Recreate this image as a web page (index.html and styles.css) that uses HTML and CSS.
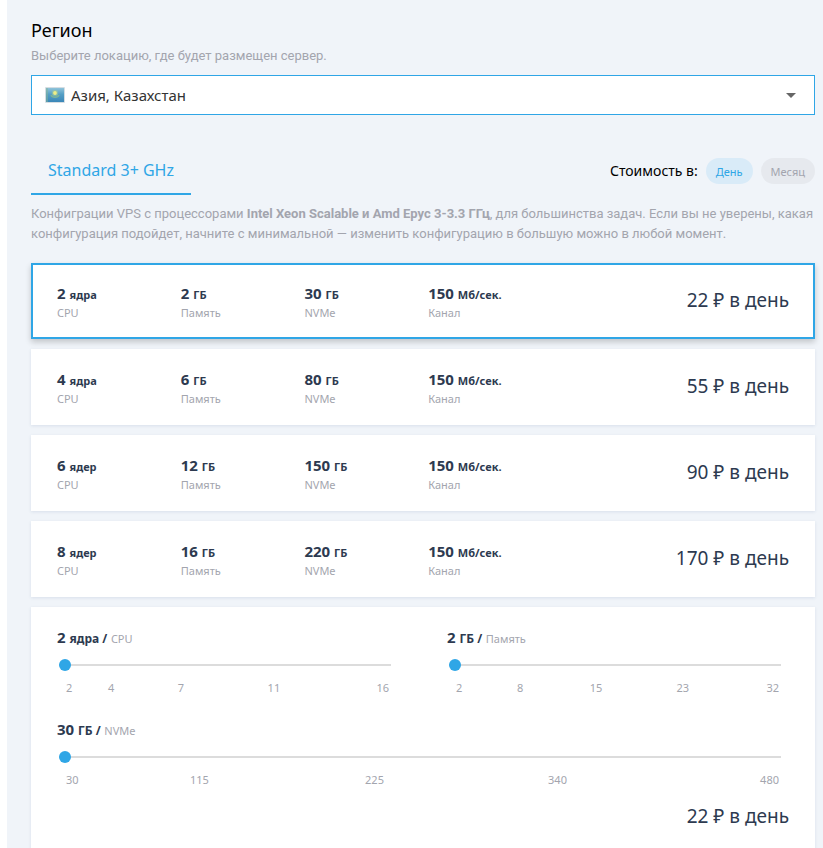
FILE: index.html
```html
<!DOCTYPE html>
<html lang="ru">
<head>
<meta charset="utf-8">
<meta name="viewport" content="width=device-width, initial-scale=1">
<title>Конфигурация VPS</title>
<link rel="stylesheet" href="styles.css">
</head>
<body>
<main class="page">
  <section class="region">
    <h2 class="region-title"><label for="region">Регион</label></h2>
    <p class="note">Выберите локацию, где будет размещен сервер.</p>
    <div class="select-box">
      <svg class="flag" viewBox="0 0 20 16" aria-hidden="true">
        <defs>
          <linearGradient id="sky" x1="0" y1="0" x2="0" y2="1">
            <stop offset="0" stop-color="#8fc3da"/>
            <stop offset="0.45" stop-color="#559fc5"/>
            <stop offset="1" stop-color="#3a86b8"/>
          </linearGradient>
        </defs>
        <rect x="0" y="0" width="20" height="16" rx="1" fill="#d5dde2"/>
        <rect x="1" y="1" width="18" height="14" fill="url(#sky)"/>
        <path d="M2 1v14" stroke="#83b49a" stroke-width="1"/>
        <path d="M6 8c1 3 7 3 8 0" fill="none" stroke="#79b39b" stroke-width="1.4"/>
        <circle cx="10" cy="6" r="3.2" fill="#9fc89a" opacity="0.6"/>
        <circle cx="10" cy="6" r="1.9" fill="#eeee87"/>
      </svg>
      <select id="region" class="select">
        <option>Азия, Казахстан</option>
      </select>
      <svg class="caret" viewBox="0 0 10 5" aria-hidden="true"><path d="M0 0h10L5 5z" fill="#666"/></svg>
    </div>
  </section>

  <div class="toolbar">
    <button class="tab" type="button">Standard 3+ GHz</button>
    <div class="period">
      <span class="period-label">Стоимость в:</span>
      <button class="pill pill-active" type="button">День</button>
      <button class="pill" type="button">Месяц</button>
    </div>
  </div>

  <p class="note">Конфиграции VPS с процессорами <strong>Intel Xeon Scalable и Amd Epyc 3-3.3 ГГц</strong>, для большинства задач. Если вы не уверены, какая конфигурация подойдет, начните с минимальной — изменить конфигурацию в большую можно в любой момент.</p>

  <div class="plans">
    <label class="card plan">
      <input class="plan-radio" type="radio" name="plan" checked>
      <span class="spec"><b class="value">2 <small>ядра</small></b><span class="caption">CPU</span></span>
      <span class="spec"><b class="value">2 <small>ГБ</small></b><span class="caption">Память</span></span>
      <span class="spec"><b class="value">30 <small>ГБ</small></b><span class="caption">NVMe</span></span>
      <span class="spec"><b class="value">150 <small>Мб/сек.</small></b><span class="caption">Канал</span></span>
      <span class="price">22 ₽ в день</span>
    </label>
    <label class="card plan">
      <input class="plan-radio" type="radio" name="plan">
      <span class="spec"><b class="value">4 <small>ядра</small></b><span class="caption">CPU</span></span>
      <span class="spec"><b class="value">6 <small>ГБ</small></b><span class="caption">Память</span></span>
      <span class="spec"><b class="value">80 <small>ГБ</small></b><span class="caption">NVMe</span></span>
      <span class="spec"><b class="value">150 <small>Мб/сек.</small></b><span class="caption">Канал</span></span>
      <span class="price">55 ₽ в день</span>
    </label>
    <label class="card plan">
      <input class="plan-radio" type="radio" name="plan">
      <span class="spec"><b class="value">6 <small>ядер</small></b><span class="caption">CPU</span></span>
      <span class="spec"><b class="value">12 <small>ГБ</small></b><span class="caption">Память</span></span>
      <span class="spec"><b class="value">150 <small>ГБ</small></b><span class="caption">NVMe</span></span>
      <span class="spec"><b class="value">150 <small>Мб/сек.</small></b><span class="caption">Канал</span></span>
      <span class="price">90 ₽ в день</span>
    </label>
    <label class="card plan">
      <input class="plan-radio" type="radio" name="plan">
      <span class="spec"><b class="value">8 <small>ядер</small></b><span class="caption">CPU</span></span>
      <span class="spec"><b class="value">16 <small>ГБ</small></b><span class="caption">Память</span></span>
      <span class="spec"><b class="value">220 <small>ГБ</small></b><span class="caption">NVMe</span></span>
      <span class="spec"><b class="value">150 <small>Мб/сек.</small></b><span class="caption">Канал</span></span>
      <span class="price">170 ₽ в день</span>
    </label>

    <div class="card custom">
      <div class="sliders">
        <div class="slider">
          <label class="slider-label" for="cpu"><b class="value">2 <small>ядра /</small></b> <span class="caption">CPU</span></label>
          <input class="range" id="cpu" type="range" min="2" max="16" value="2">
          <div class="ticks ticks-cpu"><span>2</span><span>4</span><span>7</span><span>11</span><span>16</span></div>
        </div>
        <div class="slider">
          <label class="slider-label" for="memory"><b class="value">2 <small>ГБ /</small></b> <span class="caption">Память</span></label>
          <input class="range" id="memory" type="range" min="2" max="32" value="2">
          <div class="ticks ticks-memory"><span>2</span><span>8</span><span>15</span><span>23</span><span>32</span></div>
        </div>
        <div class="slider slider-wide">
          <label class="slider-label" for="disk"><b class="value">30 <small>ГБ /</small></b> <span class="caption">NVMe</span></label>
          <input class="range" id="disk" type="range" min="30" max="480" value="30">
          <div class="ticks ticks-disk"><span>30</span><span>115</span><span>225</span><span>340</span><span>480</span></div>
        </div>
      </div>
      <p class="price">22 ₽ в день</p>
    </div>
  </div>
</main>
</body>
</html>
```
FILE: styles.css
```css
* {
  box-sizing: border-box;
}

html {
  scrollbar-width: none;
}

body {
  margin: 0;
  background: #fff;
  color: #000;
  font-family: "Noto Sans", "Open Sans", sans-serif;
  font-size: 14px;
  line-height: 20px;
}

h2,
p {
  margin: 0;
}

button,
select {
  font-family: inherit;
}

.page {
  margin-left: 7px;
  padding: 18px 8px 24px 24px;
  background: #f0f4f9;
}

.region-title {
  font-size: 18px;
  font-weight: 400;
  line-height: 24px;
}

.note {
  color: #a3a5ae;
  font-family: Roboto, "Noto Sans", sans-serif;
  font-size: 13px;
  line-height: 20px;
}

.region .note {
  padding-top: 4px;
}

.select-box {
  position: relative;
  margin-top: 9px;
}

.select {
  display: block;
  width: 100%;
  height: 40px;
  padding: 0 40px 0 39px;
  border: 1px solid #2fa6e6;
  border-radius: 0;
  background: #fff;
  color: #333;
  font-size: 15px;
  appearance: none;
}

.flag {
  position: absolute;
  top: 12px;
  left: 14px;
  width: 20px;
  height: 16px;
}

.caret {
  position: absolute;
  top: 18px;
  right: 19px;
  width: 10px;
  height: 5px;
  pointer-events: none;
}

.toolbar {
  display: flex;
  justify-content: space-between;
  align-items: flex-start;
  margin-top: 32px;
  margin-bottom: 9px;
}

.tab {
  min-width: 160px;
  height: 48px;
  padding: 0 16px;
  border: 0;
  border-bottom: 2px solid #2fa6e6;
  background: none;
  color: #2fa6e6;
  font-size: 16px;
}

.period {
  display: flex;
  align-items: center;
  gap: 8px;
  padding-top: 11px;
}

.period-label {
  font-size: 14px;
}

.pill {
  height: 26px;
  padding: 0 10px;
  border: 0;
  border-radius: 13px;
  background: #e6e9ee;
  color: #a3a5ae;
  font-size: 11px;
}

.pill-active {
  background: #d9ebf8;
  color: #2fa6e6;
}

.plans {
  display: grid;
  gap: 10px;
  margin-top: 19px;
}

.card {
  border: 2px solid transparent;
  background: #fff;
  box-shadow: 0 1px 3px rgba(50, 80, 130, 0.12);
  color: #2d3a50;
}

.plan {
  position: relative;
  display: grid;
  grid-template-columns: repeat(4, minmax(0, 12fr)) minmax(0, 23fr);
  padding: 18px 24px 16px;
  cursor: pointer;
}

.plan:has(:checked) {
  border-color: #2fa6e6;
  box-shadow: 0 3px 6px rgba(0, 0, 0, 0.2);
}

.plan-radio {
  position: absolute;
  opacity: 0;
  pointer-events: none;
}

.spec {
  display: flex;
  flex-direction: column;
  white-space: nowrap;
}

.value {
  font-size: 15px;
  font-weight: 700;
  line-height: 20px;
}

.value small {
  font-size: 11px;
}

.caption {
  color: #a3a5ae;
  font-size: 11px;
  line-height: 16px;
}

.price {
  color: #2d3a50;
  font-size: 19px;
  line-height: 34px;
  text-align: right;
  white-space: nowrap;
}

.custom {
  padding: 18px 24px 24px;
}

.sliders {
  display: grid;
  grid-template-columns: 1fr 1fr;
  gap: 22px 56px;
  padding-right: 8px;
}

.slider-wide {
  grid-column: 1 / -1;
}

.slider-label {
  display: block;
  height: 20px;
  white-space: nowrap;
}

.slider-label small {
  font-size: 12px;
}

.range {
  display: block;
  width: calc(100% - 2px);
  height: 12px;
  margin: 12px 0 8px 2px;
  background: linear-gradient(#dcdcdc, #dcdcdc) center / 100% 2px no-repeat;
  appearance: none;
}

.range::-webkit-slider-thumb {
  width: 12px;
  height: 12px;
  border-radius: 50%;
  background: #2fa6e6;
  appearance: none;
}

.range::-moz-range-thumb {
  width: 12px;
  height: 12px;
  border: 0;
  border-radius: 50%;
  background: #2fa6e6;
}

.ticks {
  display: grid;
  padding: 0 2px 0 9px;
  color: #a3a5ae;
  font-size: 11px;
  line-height: 18px;
}

.ticks-cpu {
  grid-template-columns: 42fr 70fr 90fr 109fr auto;
}

.ticks-memory {
  grid-template-columns: 61fr 73fr 87fr 90fr auto;
}

.ticks-disk {
  grid-template-columns: 124fr 175fr 183fr 212fr auto;
}

.custom .price {
  margin-top: 10px;
}
```
